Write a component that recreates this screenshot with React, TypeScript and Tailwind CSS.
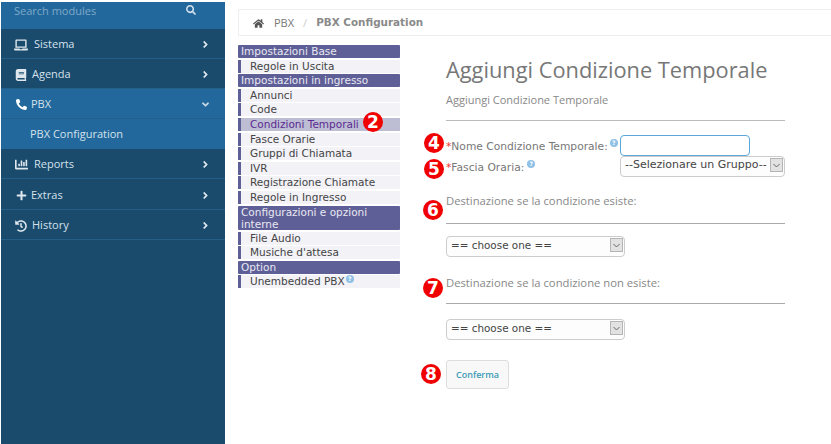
import React from "react";
import { FaSearch, FaAngleRight, FaAngleDown, FaLaptop, FaPhone, FaPlus, FaHistory, FaHome, FaChartBar, FaBook } from "react-icons/fa";

const verdana = "font-['DejaVu_Sans',sans-serif]";
const open = "font-['Open_Sans',sans-serif]";

function NavItem({ icon, label, gap, open: isOpen, active, h = "h-[30px]" }: { icon?: React.ReactNode; label: string; gap: string; open?: boolean; active?: boolean; h?: string }) {
  return (
    <div className={`${h} flex items-center border-b border-[#245f8a] pl-[13px] pr-[14px] pt-[2px] ${active ? "bg-[#22689c]" : "bg-[#1a4a6c]"} ${open} text-[11px] text-[#d5e2ec]`}>
      <span className={`flex w-[14px] shrink-0 justify-center ${gap}`}>{icon}</span>
      <span className="flex-1">{label}</span>
      {isOpen ? <FaAngleDown size={11} className="text-[#c8d8e4]" /> : <FaAngleRight size={11} className="text-[#dfe7ee]" />}
    </div>
  );
}

function Head({ children, tall }: { children: React.ReactNode; tall?: boolean }) {
  return <div className={`mt-[1.600px] ${tall ? "h-[24.500px] leading-[12.250px]" : "h-[13px] leading-[13px]"} rounded-[1px] bg-[#5f5f97] pl-[3px] text-[#e8e8f2]`}>{children}</div>;
}
function Item({ children, active }: { children: React.ReactNode; active?: boolean }) {
  return (
    <div className={`mt-[1.600px] h-[13px] border-l-[3px] border-[#5f5f97] pl-[9px] leading-[13px] ${active ? "bg-[#bdbdd3] text-[#5b2a92]" : "bg-[#f2f2f7] text-[#444]"}`}>
      {children}
    </div>
  );
}
function Help({ className = "" }: { className?: string }) {
  return <span className={`inline-flex h-[8px] w-[8px] items-center justify-center rounded-full bg-[#8fc0e6] text-[6px] leading-none font-bold text-white ${className}`}>?</span>;
}
function Badge({ n, className }: { n: string; className: string }) {
  return <span className={`absolute flex h-[20px] w-[20px] items-center justify-center rounded-full bg-[#f00000] font-['DejaVu_Sans',sans-serif] text-[17px] leading-none font-bold text-white ${className}`}>{n}</span>;
}
function Pick({ label, w, text }: { label: string; w: string; text: string }) {
  return (
    <div className={`flex h-[21px] ${w} items-start rounded-[4px] border border-[#ccc] bg-[#fdfdfd] pl-[4px] pt-[1px] ${verdana} ${text} leading-[14px] text-[#444]`}>
      <span className="flex-1 whitespace-nowrap">{label}</span>
      <span className="mr-px flex h-[14px] w-[13px] shrink-0 items-center justify-center border border-[#b5b5b5] bg-[#e2e2e2]">
        <svg width="7" height="5" viewBox="0 0 7 5" fill="none" stroke="#666" strokeWidth="1"><path d="M.5 1 3.500 4l3-3" /></svg>
      </span>
    </div>
  );
}

export default function App() {
  return (
    <div className="flex h-[444px] w-[831px] overflow-hidden bg-white">
      <aside className="ml-px mt-[2px] flex w-[224px] shrink-0 flex-col bg-[#1a4a6c]">
        <div className={`flex h-[27px] items-start justify-between bg-[#22689c] pl-[13px] pr-[29px] pt-px ${open} text-[11px] text-[#7fa9c9]`}>
          <span>Search modules</span>
          <FaSearch size={10} className="mt-[2px] text-[#d5e2ec]" />
        </div>
        <NavItem icon={<FaLaptop size={14} color="#dfe7ee" />} label="Sistema" gap="mr-[6px]" />
        <NavItem icon={<FaBook size={12} color="#dfe7ee" />} label="Agenda" gap="mr-[4px]" />
        <NavItem icon={<FaPhone size={11} color="#fff" className="-scale-x-100" />} label="PBX" gap="mr-[3px]" open active />
        <div className={`flex h-[30px] items-center bg-[#22689c] pl-[29px] ${open} text-[11px] text-[#d5e2ec]`}>PBX Configuration</div>
        <NavItem icon={<FaChartBar size={13} color="#dfe7ee" />} label="Reports" gap="mr-[6px]" />
        <NavItem icon={<FaPlus size={11} color="#dfe7ee" />} label="Extras" gap="mr-[3px]" h="h-[31px]" />
        <NavItem icon={<FaHistory size={12} color="#dfe7ee" />} label="History" gap="mr-[4px]" />
      </aside>

      <main className="relative min-w-0 flex-1 pl-[13px]">
        <nav className={`mt-[9px] flex h-[27px] items-center rounded-l-[2px] border border-r-0 border-[#eee] pl-[14px] pt-px ${open} text-[11px] text-[#777]`}>
          <FaHome size={11} color="#555" />
          <span className="ml-[10px]">PBX</span>
          <span className="mx-[9px] text-[#ccc]">/</span>
          <span className={`${verdana} text-[10.400px] font-bold text-[#8a8a8a]`}>PBX Configuration</span>
        </nav>

        <div className="flex">
          <div className={`mt-[7.400px] w-[162px] shrink-0 ${verdana} text-[10.500px] text-[#444]`}>
            <Head>Impostazioni Base</Head>
            <Item>Regole in Uscita</Item>
            <Head>Impostazioni in ingresso</Head>
            <Item>Annunci</Item>
            <Item>Code</Item>
            <Item active>Condizioni Temporali</Item>
            <Item>Fasce Orarie</Item>
            <Item>Gruppi di Chiamata</Item>
            <Item>IVR</Item>
            <Item>Registrazione Chiamate</Item>
            <Item>Regole in Ingresso</Item>
            <Head tall>Configurazioni e opzioni interne</Head>
            <Item>File Audio</Item>
            <Item>Musiche d'attesa</Item>
            <Head>Option</Head>
            <Item>
              Unembedded PBX<Help className="relative -top-[4px] ml-[1px]" />
            </Item>
          </div>

          <section className={`ml-[46px] w-[339px] ${open} text-[11px] text-[#888]`}>
            <h1 className="mt-[19px] text-[21.800px] leading-[30px] text-[#777]">Aggiungi Condizione Temporale</h1>
            <p className="mt-[8px] text-[11px] leading-[14px]">Aggiungi Condizione Temporale</p>
            <hr className="mt-[13px] w-[339px] border-t-[1.500px] border-[#bbb]" />
            <div className="mt-[14px] flex h-[21px]">
              <label className={`w-[174px] pt-[4px] ${verdana} text-[10.700px] leading-[16px] text-[#777]`}>
                <span className="text-[#e33]">*</span>Nome Condizione Temporale:<Help className="relative -top-[5px] ml-[2px]" />
              </label>
              <input className="h-[21px] w-[130px] rounded-[4px] border border-[#5ba7d9] bg-white outline-none" />
            </div>
            <div className="flex h-[21px]">
              <label className={`w-[174px] pt-[4px] ${verdana} text-[10.700px] leading-[16px] text-[#777]`}>
                <span className="text-[#e33]">*</span>Fascia Oraria:<Help className="relative -top-[5px] ml-[3px]" />
              </label>
              <Pick label="--Selezionare un Gruppo--" w="w-[165px]" text="text-[11px]" />
            </div>
            <p className="mt-[17px] text-[11.250px] leading-[14px]">Destinazione se la condizione esiste:</p>
            <hr className="mt-[15px] w-[339px] border-t-[1.500px] border-[#aaa]" />
            <div className="mt-[12px]"><Pick label="== choose one ==" w="w-[179px]" text="text-[10.400px]" /></div>
            <p className="mt-[19px] text-[11.250px] leading-[14px]">Destinazione se la condizione non esiste:</p>
            <hr className="mt-[13px] w-[339px] border-t-[1.500px] border-[#aaa]" />
            <div className="mt-[15px]"><Pick label="== choose one ==" w="w-[179px]" text="text-[10.400px]" /></div>
            <button className="mt-[20px] h-[29px] w-[63px] rounded-[3px] border border-[#ddd] bg-[#f8f8f8] text-[9px] font-semibold text-[#3d9ab5]">Conferma</button>
          </section>
        </div>

        <Badge n="2" className="left-[138px] top-[112px]" />
        <Badge n="4" className="left-[199px] top-[133px]" />
        <Badge n="5" className="left-[199px] top-[159px]" />
        <Badge n="6" className="left-[198px] top-[200px]" />
        <Badge n="7" className="left-[198px] top-[278px]" />
        <Badge n="8" className="left-[196px] top-[364px]" />
      </main>
    </div>
  );
}
